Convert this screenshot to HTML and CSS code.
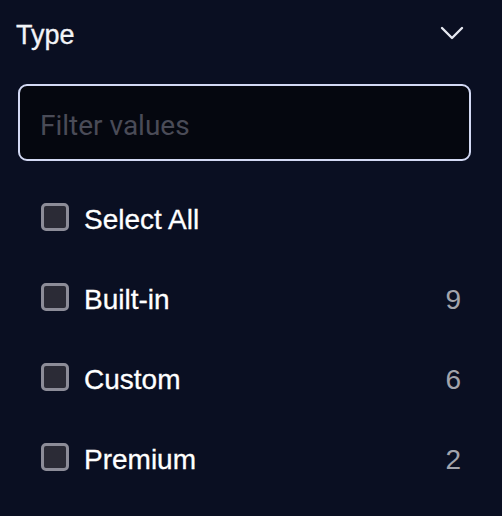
FILE: index.html
```html
<!DOCTYPE html>
<html>
<head>
<meta charset="utf-8">
<link rel="stylesheet" href="styles.css">
</head>
<body>
<div class="panel">
  <div class="header">
    <span class="title">Type</span>
    <svg class="chevron" width="24" height="14" viewBox="0 0 24 14"><path d="M2 2 L12 12 L22 2" fill="none" stroke="#e6e8f0" stroke-width="2.4" stroke-linecap="round" stroke-linejoin="round"/></svg>
  </div>
  <input class="filter" type="text" placeholder="Filter values">
  <ul class="list">
    <li class="row"><span class="box"></span><span class="label">Select All</span></li>
    <li class="row"><span class="box"></span><span class="label">Built-in</span><span class="count">9</span></li>
    <li class="row"><span class="box"></span><span class="label">Custom</span><span class="count">6</span></li>
    <li class="row"><span class="box"></span><span class="label">Premium</span><span class="count">2</span></li>
  </ul>
</div>
</body>
</html>
```
FILE: styles.css
```css
html, body {
  margin: 0;
  padding: 0;
  background: #0a0f22;
}
body {
  width: 502px;
  height: 516px;
  overflow: hidden;
  font-family: "Liberation Sans", Arial, sans-serif;
  color: #ffffff;
}
.panel {
  display: flex;
  flex-direction: column;
}
.header {
  height: 68px;
  display: flex;
  align-items: center;
  justify-content: space-between;
  padding: 0 38px 0 16px;
}
.title {
  font-size: 27px;
  color: #f2f3f7;
  padding-top: 3px;
  -webkit-text-stroke: 0.3px #f2f3f7;
}
.chevron {
  display: block;
  margin-top: -2px;
}
.filter {
  box-sizing: border-box;
  margin: 16px 0 0 18px;
  width: 453px;
  height: 77px;
  border: 2px solid #d3d9f4;
  border-radius: 9px;
  background: #05070f;
  padding: 6px 20px 0 20px;
  font-family: Roboto, "Liberation Sans", sans-serif;
  font-size: 28px;
  color: #ffffff;
  outline: none;
}
.filter::placeholder {
  color: #4a4b57;
}
.list {
  list-style: none;
  margin: 0;
  padding: 16px 0 0 0;
}
.row {
  height: 80px;
  display: flex;
  align-items: center;
  padding: 0 41px 0 41px;
}
.box {
  box-sizing: border-box;
  width: 28px;
  height: 28px;
  border: 3px solid #8c8c98;
  border-radius: 5px;
  background: #2b2b36;
  flex: none;
}
.label {
  margin-left: 15px;
  padding-top: 6px;
  font-size: 28px;
  flex: 1;
  -webkit-text-stroke: 0.3px #ffffff;
}
.count {
  padding-top: 6px;
  font-size: 28px;
  color: #a3a4ac;
}
```
